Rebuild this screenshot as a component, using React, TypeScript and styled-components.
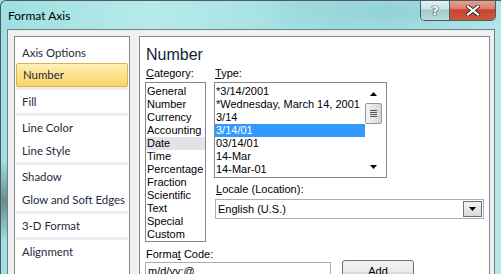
import styled, { createGlobalStyle } from 'styled-components';

const GlobalStyle = createGlobalStyle`
  body {
    margin: 0;
    overflow: hidden;
    background: #a8e2e3;
  }
`;

const navItems: { label: string; sepBefore?: boolean; active?: boolean }[] = [
  { label: 'Axis Options' },
  { label: 'Number', active: true },
  { label: 'Fill', sepBefore: true },
  { label: 'Line Color', sepBefore: true },
  { label: 'Line Style' },
  { label: 'Shadow', sepBefore: true },
  { label: 'Glow and Soft Edges' },
  { label: '3-D Format', sepBefore: true },
  { label: 'Alignment', sepBefore: true },
];

const categories = [
  'General', 'Number', 'Currency', 'Accounting', 'Date', 'Time',
  'Percentage', 'Fraction', 'Scientific', 'Text', 'Special', 'Custom',
];

const types = [
  '*3/14/2001',
  '*Wednesday, March 14, 2001',
  '3/14',
  '3/14/01',
  '03/14/01',
  '14-Mar',
  '14-Mar-01',
];

const App = () => {
  return (
    <>
      <GlobalStyle />
      <Window>
        <TitleBar>
          <Title>Format Axis</Title>
          <CaptionButtons>
            <HelpButton>?</HelpButton>
            <CloseButton>
              <svg width="14" height="11" viewBox="0 0 14 11">
                <path d="M2 1.5 L12 9.5 M12 1.5 L2 9.5" stroke="#3a2a28" strokeWidth="4" strokeLinecap="square" />
                <path d="M2 1.5 L12 9.5 M12 1.5 L2 9.5" stroke="#fff" strokeWidth="2.2" strokeLinecap="square" />
              </svg>
            </CloseButton>
          </CaptionButtons>
        </TitleBar>
        <Client>
          <NavPanel>
            {navItems.map((item) => (
              <div key={item.label}>
                {item.sepBefore && <NavSeparator />}
                <NavItem $active={item.active}>{item.label}</NavItem>
              </div>
            ))}
          </NavPanel>
          <ContentPanel>
            <Heading>Number</Heading>
            <Columns>
              <CategoryColumn>
                <Label><u>C</u>ategory:</Label>
                <CategoryList>
                  {categories.map((c) => (
                    <ListRow key={c} $state={c === 'Date' ? 'soft' : undefined}>{c}</ListRow>
                  ))}
                </CategoryList>
              </CategoryColumn>
              <TypeColumn>
                <Label><u>T</u>ype:</Label>
                <TypeList>
                  <TypeRows>
                    {types.map((t) => (
                      <ListRow key={t} $state={t === '3/14/01' ? 'selected' : undefined}>{t}</ListRow>
                    ))}
                  </TypeRows>
                  <ScrollBar>
                    <ScrollArrow>
                      <svg width="7" height="4" viewBox="0 0 7 4"><path d="M0 4 L3.5 0 L7 4 Z" fill="#000" /></svg>
                    </ScrollArrow>
                    <Thumb>
                      <Grip />
                      <Grip />
                      <Grip />
                      <Grip />
                    </Thumb>
                    <ScrollSpacer />
                    <ScrollArrow>
                      <svg width="7" height="4" viewBox="0 0 7 4"><path d="M0 0 L7 0 L3.5 4 Z" fill="#000" /></svg>
                    </ScrollArrow>
                  </ScrollBar>
                </TypeList>
                <LocaleLabel><u>L</u>ocale (Location):</LocaleLabel>
                <Select>
                  <SelectText>English (U.S.)</SelectText>
                  <SelectButton>
                    <svg width="7" height="4" viewBox="0 0 7 4"><path d="M0 0 L7 0 L3.5 4 Z" fill="#000" /></svg>
                  </SelectButton>
                </Select>
              </TypeColumn>
            </Columns>
            <FormatLabel>Forma<u>t</u> Code:</FormatLabel>
            <FormatRow>
              <CodeInput>m/d/yy;@</CodeInput>
              <AddButton>Add</AddButton>
            </FormatRow>
          </ContentPanel>
        </Client>
      </Window>
    </>
  );
};

const Window = styled.div`
  width: 500px;
  height: 273px;
  overflow: hidden;
  display: flex;
  flex-direction: column;
  border-left: 1px solid #4b5d63;
  border-top: 1px solid #4b5d63;
  border-top-left-radius: 6px;
  background:
    radial-gradient(ellipse 60px 40px at 3px 200px, rgba(60, 70, 70, 0.55), transparent),
    radial-gradient(ellipse 140px 30px at 390px 10px, rgba(120, 190, 200, 0.5), transparent),
    linear-gradient(90deg, #9fdfe1 0%, #b7eaea 30%, #a4e0e2 60%, #b4e9ea 100%);
`;

const TitleBar = styled.div`
  height: 28px;
  display: flex;
  align-items: flex-start;
  flex-shrink: 0;
`;

const Title = styled.div`
  font-family: 'Lato', 'Liberation Sans', sans-serif;
  font-size: 12px;
  color: #000;
  padding: 7px 0 0 7px;
  line-height: 15px;
`;

const CaptionButtons = styled.div`
  margin-left: auto;
  margin-right: 5px;
  margin-top: -2px;
  display: flex;
  height: 21px;
  border: 1px solid #455e68;
  border-top: none;
  border-radius: 0 0 5px 5px;
  overflow: hidden;
`;

const HelpButton = styled.div`
  width: 28px;
  display: flex;
  align-items: center;
  justify-content: center;
  padding-top: 1px;
  font-family: 'DejaVu Sans', sans-serif;
  font-weight: bold;
  font-size: 13px;
  color: #fff;
  text-shadow: 0 0 1px #2d3e44, 0 0 1px #2d3e44, 0 0 1px #2d3e44;
  border-right: 1px solid #455e68;
  background: linear-gradient(180deg, #e6f4f4 0%, #c9e3e5 48%, #a3c9cc 52%, #b8dadc 100%);
`;

const CloseButton = styled.div`
  width: 45px;
  display: flex;
  align-items: center;
  justify-content: center;
  padding-top: 1px;
  background: linear-gradient(180deg, #e9a899 0%, #da8070 45%, #c7432e 52%, #d0563f 100%);
`;

const Client = styled.div`
  flex: 1;
  margin: 0 6px 0 6px;
  display: flex;
  gap: 9px;
  padding: 6px 4px 0 6px;
  background: #f0f0f0;
  border: 1px solid #6e8087;
  border-bottom: none;
  min-height: 0;
`;

const NavPanel = styled.div`
  width: 114px;
  flex-shrink: 0;
  height: 260px;
  padding-top: 4px;
  background: #fff;
  border: 1px solid #828790;
  box-sizing: content-box;
`;

const NavItem = styled.div<{ $active?: boolean }>`
  height: ${(p) => (p.$active ? '24px' : '23px')};
  line-height: ${(p) => (p.$active ? '22px' : '23px')};
  margin: ${(p) => (p.$active ? '-1px 1px 0 1px' : '0')};
  padding-left: ${(p) => (p.$active ? '6px' : '7px')};
  box-sizing: border-box;
  font-family: 'Lato', 'Liberation Sans', sans-serif;
  font-size: 11.4px;
  color: #1e2b40;
  white-space: nowrap;
  border: ${(p) => (p.$active ? '1px solid #e0b14f' : 'none')};
  border-radius: 2px;
  background: ${(p) =>
    p.$active ? 'linear-gradient(180deg, #fef0b8 0%, #fde18a 50%, #f9d66a 100%)' : 'transparent'};
`;

const NavSeparator = styled.div`
  height: 3px;
  margin: 0 1px;
  background: #eceef2;
`;

const ContentPanel = styled.div`
  flex: 1;
  height: 260px;
  background: #fff;
  border: 1px solid #828790;
  padding-left: 5px;
  font-family: 'Liberation Sans', Arial, sans-serif;
  font-size: 11px;
  color: #000;
`;

const Heading = styled.div`
  padding: 8px 0 0 1px;
  font-family: 'Liberation Sans', Arial, sans-serif;
  font-size: 16px;
  line-height: 20px;
  color: #0f1e36;
`;

const Columns = styled.div`
  display: flex;
  gap: 8px;
`;

const CategoryColumn = styled.div`
  width: 61px;
  display: flex;
  flex-direction: column;
`;

const TypeColumn = styled.div`
  width: 270px;
  display: flex;
  flex-direction: column;
`;

const Label = styled.div`
  margin-top: 2px;
  line-height: 13px;
  height: 13px;
  padding-left: 1px;
  font-size: 11px;
`;

const CategoryList = styled.div`
  margin-top: 2px;
  border: 1px solid #828790;
  padding-top: 2px;
  overflow: hidden;
  box-sizing: border-box;
  height: 160px;
`;

const ListRow = styled.div<{ $state?: 'selected' | 'soft' }>`
  height: 13px;
  line-height: 13px;
  padding-left: 1px;
  font-size: 11px;
  white-space: nowrap;
  color: ${(p) => (p.$state === 'selected' ? '#fff' : '#000')};
  background: ${(p) =>
    p.$state === 'selected' ? '#3399ff' : p.$state === 'soft' ? '#e2e2e8' : 'transparent'};
`;

const TypeList = styled.div`
  margin-top: 2px;
  width: 173px;
  height: 96px;
  box-sizing: border-box;
  border: 1px solid #828790;
  display: flex;
`;

const TypeRows = styled.div`
  flex: 1;
  padding-top: 2px;
  overflow: hidden;
`;

const ScrollBar = styled.div`
  display: flex;
  flex-direction: column;
  padding: 2px 4px 2px 0;
  box-sizing: border-box;
  width: 21px;
`;

const ScrollArrow = styled.div`
  height: 17px;
  display: flex;
  align-items: center;
  justify-content: center;
`;

const Thumb = styled.div`
  height: 21px;
  margin-top: 1px;
  border: 1px solid #979797;
  border-radius: 2px;
  box-sizing: border-box;
  background: linear-gradient(90deg, #f4f4f4 0%, #e6e6e6 50%, #d6d6d6 100%);
  display: flex;
  flex-direction: column;
  align-items: center;
  justify-content: center;
  gap: 1px;
`;

const Grip = styled.div`
  width: 7px;
  height: 1px;
  background: #555;
`;

const ScrollSpacer = styled.div`
  flex: 1;
`;

const LocaleLabel = styled(Label)`
  margin-top: 5px;
  padding-left: 2px;
`;

const Select = styled.div`
  margin: 3px 0 0 1px;
  height: 20px;
  box-sizing: border-box;
  border: 1px solid #abadb3;
  display: flex;
  align-items: center;
  padding-right: 1px;
`;

const SelectText = styled.div`
  flex: 1;
  padding-left: 2px;
  font-size: 11px;
`;

const SelectButton = styled.div`
  width: 19px;
  height: 16px;
  box-sizing: border-box;
  border: 1px solid #707070;
  background: linear-gradient(180deg, #f3f3f3 0%, #e8e8e8 50%, #d8d8d8 100%);
  display: flex;
  align-items: center;
  justify-content: center;
`;

const FormatLabel = styled(Label)`
  margin-top: 6px;
`;

const FormatRow = styled.div`
  display: flex;
  align-items: flex-start;
  gap: 11px;
  margin-top: 1px;
`;

const CodeInput = styled.div`
  width: 186px;
  height: 21px;
  box-sizing: border-box;
  border: 1px solid #abadb3;
  padding: 2px 0 0 2px;
  font-size: 11px;
`;

const AddButton = styled.div`
  width: 72px;
  height: 23px;
  margin-top: -2px;
  box-sizing: border-box;
  border: 1px solid #707070;
  border-radius: 3px;
  background: linear-gradient(180deg, #f2f2f2 0%, #ebebeb 50%, #dddddd 51%, #cfcfcf 100%);
  display: flex;
  justify-content: center;
  padding-top: 4px;
  font-size: 11px;
`;

export default App;
